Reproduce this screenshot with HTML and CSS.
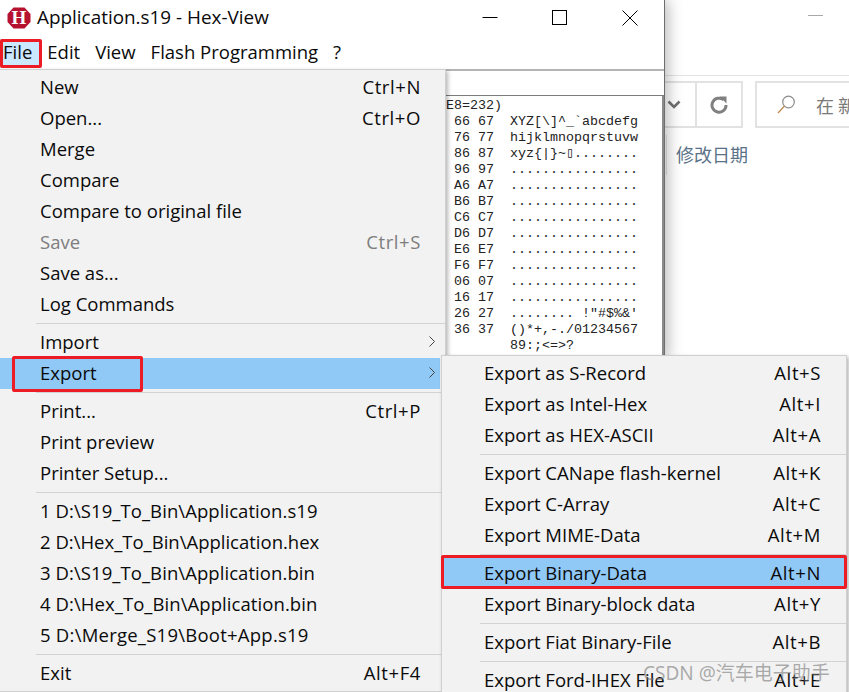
FILE: index.html
```html
<!DOCTYPE html>
<html lang="en">
<head>
<meta charset="utf-8">
<title>Application.s19 - Hex-View</title>
<link rel="stylesheet" href="styles.css">
</head>
<body>
<div class="desktop">

  <section class="explorer">
    <svg class="ex-min" width="15" height="1" viewBox="0 0 15 1"><rect width="15" height="1" fill="#a8a8a8"/></svg>
    <div class="ex-bar">
      <div class="ex-nav">
        <div class="ex-chevron">
          <svg width="14" height="9" viewBox="0 0 14 9"><path d="M1.500 1.500 7 7l5.500-5.500" fill="none" stroke="#6f6f6f" stroke-width="2.600"/></svg>
        </div>
        <div class="ex-refresh">
          <svg width="18" height="18" viewBox="0 0 18 18"><path d="M13.500 3.800A7 7 0 1 0 16 9" fill="none" stroke="#808080" stroke-width="3"/><path d="M9.500 0.500 16.500 0.500 16.500 7.500Z" fill="#808080"/></svg>
        </div>
      </div>
      <div class="ex-search">
        <svg class="ex-search-icon" width="19" height="19" viewBox="0 0 19 19"><circle cx="11.500" cy="7" r="5.800" fill="none" stroke="#8c8c8c" stroke-width="1.200"/><path d="M7.500 11 1 18" fill="none" stroke="#c08a52" stroke-width="1.300"/></svg>
        <span class="ex-search-text">在 新</span>
      </div>
    </div>
    <div class="ex-columns"><span class="ex-col">修改日期</span></div>
  </section>

  <section class="hexwin">
    <header class="titlebar">
      <svg class="app-icon" width="24" height="22" viewBox="0 0 24 22">
        <path d="M6.500 0.500H17.500L23.500 7V15L17.500 21.500H6.500L0.500 15V7Z" fill="#b5122f"/>
        <text x="12" y="17" text-anchor="middle" class="app-icon-letter">H</text>
      </svg>
      <span class="title">Application.s19 - Hex-View</span>
      <div class="winctl">
        <svg width="16" height="16" viewBox="0 0 16 16"><path d="M0.500 7.500H15.500" stroke="#000" fill="none"/></svg>
        <svg width="16" height="16" viewBox="1 0 16 16"><rect x="1.500" y="0.500" width="14" height="14" stroke="#000" fill="none"/></svg>
        <svg width="16" height="16" viewBox="0 0 16 16"><path d="M0.500 0.500 15.500 15.500M15.500 0.500 0.500 15.500" stroke="#000" fill="none"/></svg>
      </div>
    </header>
    <nav class="menubar">
      <span class="mb-item mb-active">File</span>
      <span class="mb-item">Edit</span>
      <span class="mb-item">View</span>
      <span class="mb-item">Flash Programming</span>
      <span class="mb-item">?</span>
    </nav>
    <div class="toolbar"></div>
    <pre class="hexdump">E8=232)
 66 67  XYZ[\]^_`abcdefg
 76 77  hijklmnopqrstuvw
 86 87  xyz{|}~▯........
 96 97  ................
 A6 A7  ................
 B6 B7  ................
 C6 C7  ................
 D6 D7  ................
 E6 E7  ................
 F6 F7  ................
 06 07  ................
 16 17  ................
 26 27  ........ !"#$%&amp;'
 36 37  ()*+,-./01234567
        89:;&lt;=&gt;?</pre>
  </section>

  <div class="menu file-menu">
    <div class="item"><span>New</span><span class="key">Ctrl+N</span></div>
    <div class="item"><span>Open...</span><span class="key">Ctrl+O</span></div>
    <div class="item"><span>Merge</span></div>
    <div class="item"><span>Compare</span></div>
    <div class="item"><span>Compare to original file</span></div>
    <div class="item disabled"><span>Save</span><span class="key">Ctrl+S</span></div>
    <div class="item"><span>Save as...</span></div>
    <div class="item"><span>Log Commands</span></div>
    <div class="sep"></div>
    <div class="item"><span>Import</span><svg class="arrow" width="6" height="11" viewBox="0 0 6 11"><path d="M0.500 0.500 5.500 5.500 0.500 10.500" fill="none" stroke="#444"/></svg></div>
    <div class="item active"><span>Export</span><svg class="arrow" width="6" height="11" viewBox="0 0 6 11"><path d="M0.500 0.500 5.500 5.500 0.500 10.500" fill="none" stroke="#444"/></svg></div>
    <div class="sep"></div>
    <div class="item"><span>Print...</span><span class="key">Ctrl+P</span></div>
    <div class="item"><span>Print preview</span></div>
    <div class="item"><span>Printer Setup...</span></div>
    <div class="sep"></div>
    <div class="item"><span class="path">1 D:\S19_To_Bin\Application.s19</span></div>
    <div class="item"><span>2 D:\Hex_To_Bin\Application.hex</span></div>
    <div class="item"><span class="path">3 D:\S19_To_Bin\Application.bin</span></div>
    <div class="item"><span class="path">4 D:\Hex_To_Bin\Application.bin</span></div>
    <div class="item"><span class="path-wide">5 D:\Merge_S19\Boot+App.s19</span></div>
    <div class="sep"></div>
    <div class="item"><span>Exit</span><span class="key">Alt+F4</span></div>
  </div>

  <div class="menu sub-menu">
    <div class="item"><span>Export as S-Record</span><span class="key">Alt+S</span></div>
    <div class="item"><span>Export as Intel-Hex</span><span class="key">Alt+I</span></div>
    <div class="item"><span>Export as HEX-ASCII</span><span class="key">Alt+A</span></div>
    <div class="sep"></div>
    <div class="item"><span>Export CANape flash-kernel</span><span class="key">Alt+K</span></div>
    <div class="item"><span>Export C-Array</span><span class="key">Alt+C</span></div>
    <div class="item"><span>Export MIME-Data</span><span class="key">Alt+M</span></div>
    <div class="sep"></div>
    <div class="item active"><span>Export Binary-Data</span><span class="key">Alt+N</span></div>
    <div class="item"><span>Export Binary-block data</span><span class="key">Alt+Y</span></div>
    <div class="sep"></div>
    <div class="item"><span>Export Fiat Binary-File</span><span class="key">Alt+B</span></div>
    <div class="sep"></div>
    <div class="item"><span>Export Ford-IHEX File</span><span class="key">Alt+E</span></div>
  </div>

  <div class="mark mark-file"></div>
  <div class="mark mark-export"></div>
  <div class="mark mark-binary"></div>
  <div class="watermark">CSDN @汽车电子助手</div>
</div>
</body>
</html>
```
FILE: styles.css
```css
* { box-sizing: border-box; }
html, body { margin: 0; padding: 0; background: #fff; }
.desktop {
  position: relative;
  width: 849px;
  height: 692px;
  overflow: hidden;
  background: #fff;
  font-family: "Open Sans", "Noto Sans", sans-serif;
  font-size: 18.5px;
  color: #0a0a0a;
}

/* Explorer window behind */
.explorer { position: absolute; left: 664px; top: 0; width: 185px; height: 355px; background: #fff; }
.ex-min { position: absolute; left: 144px; top: 15px; }
.ex-bar {
  position: absolute; left: 0; right: 0; top: 75px; height: 53px;
  border-top: 1px solid #e4e4e4;
  display: flex; gap: 12px; padding-top: 5px;
}
.ex-nav { display: flex; width: 79px; height: 47px; border: 2px solid #e2e2e2; border-left: 0; }
.ex-chevron { width: 33px; display: flex; align-items: center; border-right: 2px solid #e2e2e2; padding-left: 3px; }
.ex-refresh { flex: 1; display: flex; align-items: center; justify-content: center; }
.ex-search { flex: 1; height: 47px; border: 2px solid #e2e2e2; border-right: 0; display: flex; align-items: center; padding-left: 20px; gap: 20px; white-space: nowrap; overflow: hidden; }
.ex-search-icon { flex: none; }
.ex-search-text { font-family: "Noto Sans CJK SC", sans-serif; font-size: 18px; color: #7a7a7a; flex: none; }
.ex-columns { position: absolute; left: 2px; top: 135px; height: 40px; border-left: 1px solid #e4e4e4; display: flex; align-items: center; padding-left: 9px; }
.ex-col { font-family: "Noto Sans CJK SC", sans-serif; font-size: 18px; color: #5a7288; padding-bottom: 2px; }

/* Hex-View window */
.hexwin {
  position: absolute; left: 0; top: 0; width: 665px; height: 360px;
  background: #fff;
  border-right: 1px solid #6e6e6e;
  box-shadow: 3px 0 14px rgba(0,0,0,.28);
  display: flex; flex-direction: column;
}
.titlebar { height: 33px; display: flex; align-items: center; padding-left: 7px; gap: 6px; flex: none; }
.app-icon { flex: none; margin-top: 2px; }
.app-icon-letter { font-family: "Liberation Serif", serif; font-weight: 700; font-size: 19px; fill: #fff; }
.title { font-size: 18.9px; white-space: nowrap; }
.winctl { margin-left: auto; display: flex; gap: 54px; padding-right: 26px; padding-top: 2px; }
.menubar { height: 36px; display: flex; align-items: flex-start; flex: none; padding-top: 6px; }
.mb-item { height: 29px; padding: 0 7px 0 3px; margin-right: 5px; white-space: nowrap; line-height: 25px; }
.mb-active { background: #cce8ff; }
.toolbar { height: 27px; flex: none; border-top: 2px solid #b4b4b4; border-bottom: 1px solid #7c7c7c; box-shadow: inset 0 -1px 0 #fff; }
.hexdump {
  margin: 0; flex: 1;
  padding: 2px 0 0 446px;
  font-family: "Liberation Mono", monospace; font-size: 13.33px; line-height: 16px;
  color: #222; background: #fff;
  border-right: 2px solid #8a8a8a;
}

/* Menus */
.menu {
  position: absolute;
  background: #f2f2f2;
  border: 1px solid #cfcfcf;
  padding: 2px 0;
  box-shadow: 2px 2px 4px rgba(0,0,0,.28);
}
.file-menu { left: -1px; top: 69px; width: 447px; height: 623px; }
.sub-menu { left: 441px; top: 355px; width: 406px; height: 345px; }
.item { height: 31px; display: flex; align-items: center; justify-content: space-between; white-space: nowrap; padding-bottom: 2px; }
.file-menu .item { padding-left: 40px; padding-right: 24px; }
.file-menu .item .arrow { margin-right: -14px; }
.sub-menu .item { padding-left: 42px; padding-right: 25px; }
.key { letter-spacing: .6px; }
.path { letter-spacing: .07px; }
.path-wide { letter-spacing: .24px; }
.item.active { background: #90c8f6; }
.file-menu .item.active { margin-right: 5px; padding-right: 19px; }
.item.disabled { color: #7d7d7d; }
.sep { height: 7px; margin-left: 36px; padding-top: 3px; }
.sub-menu .sep { margin-left: 38px; }
.sep::before { content: ""; display: block; height: 1px; background: #d2d2d2; }

/* Red annotations */
.mark { position: absolute; border: 3px solid #ed1c24; border-radius: 2px; }
.mark-file { left: 0; top: 39px; width: 42px; height: 29px; }
.mark-export { left: 12px; top: 356px; width: 131px; height: 36px; }
.mark-binary { left: 441px; top: 555px; width: 406px; height: 34px; }

.watermark {
  position: absolute; left: 643px; top: 660px;
  font-family: "Noto Sans", "Noto Sans CJK SC", sans-serif;
  font-size: 19px; line-height: 26px; white-space: nowrap;
  color: rgba(120,120,120,.6);
}
```
